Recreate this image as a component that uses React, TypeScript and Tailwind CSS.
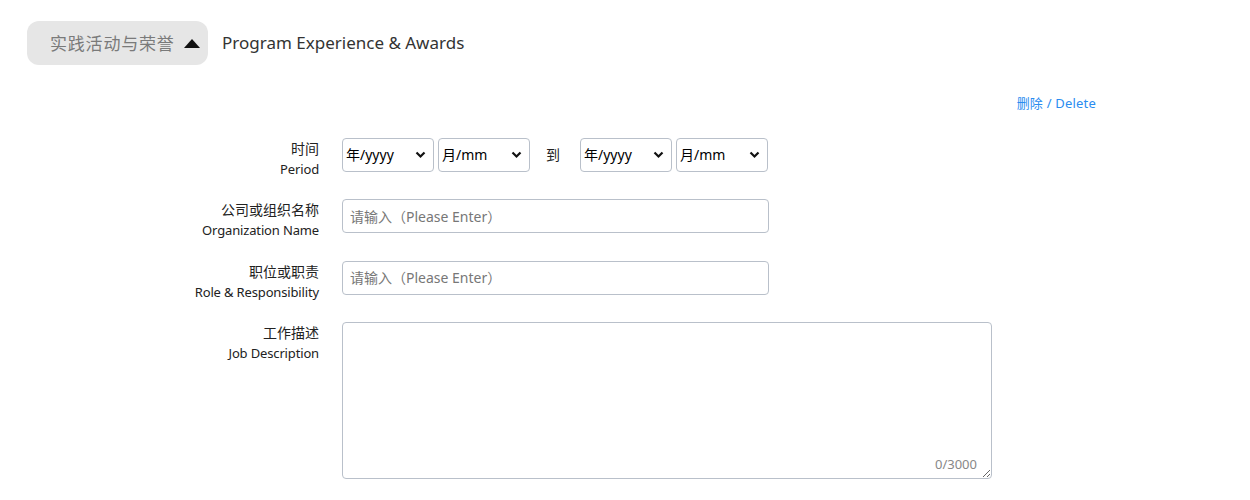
import { useState } from 'react';

const CN = '"Noto Sans", "Noto Sans CJK SC", sans-serif';

function Chevron() {
  return (
    <svg width="11" height="8" viewBox="0 0 11 8" className="pointer-events-none absolute right-[8px] top-[13px]">
      <path d="M1.5 1.5 L5.5 5.5 L9.5 1.5" stroke="#111" strokeWidth="2.2" fill="none" />
    </svg>
  );
}

function Select({ label }: { label: string }) {
  return (
    <div className="relative w-[92px]">
      <select
        className="h-[34px] w-full appearance-none rounded-[4px] border border-[#b9c0ca] bg-white pl-[3px] text-[14px] text-black outline-none"
        style={{ fontFamily: CN }}
      >
        <option>{label}</option>
      </select>
      <Chevron />
    </div>
  );
}

function Label({ cn, en }: { cn: string; en: string }) {
  return (
    <div className="h-[34px] w-[319px] shrink-0 pt-[1px] text-right leading-[20px] text-[#222]" style={{ fontFamily: CN }}>
      <div className="text-[14px]">{cn}</div>
      <div className="text-[13px] tracking-[-0.15px]">{en}</div>
    </div>
  );
}

export default function App() {
  const [desc, setDesc] = useState('');

  return (
    <div className="h-[500px] w-[1250px] bg-white" style={{ fontFamily: CN }}>
      {/* Section header */}
      <div className="flex items-center pl-[27px] pt-[21px]">
        <button className="flex h-[44px] w-[181px] items-center rounded-[12px] bg-[#e6e6e6] pl-[23px]">
          <span className="text-[17px] tracking-[0.8px] text-[#7a7a7a]" style={{ fontFamily: '"Noto Sans CJK SC", serif' }}>
            实践活动与荣誉
          </span>
          <svg width="16" height="9" viewBox="0 0 16 9" className="ml-[9px]">
            <path d="M8 0 L16 9 L0 9 Z" fill="#111" />
          </svg>
        </button>
        <span className="ml-[14px] text-[17px] text-[#333]">Program Experience &amp; Awards</span>
      </div>

      {/* Delete link */}
      <div className="mt-[29px] flex w-[1096px] justify-end">
        <a className="text-[13px] tracking-[0.2px] text-[#2a8cf0]">删除 / Delete</a>
      </div>

      {/* Form */}
      <div className="mt-[24px] flex flex-col gap-[27.5px]">
        <div className="flex h-[34px] gap-[23px]">
          <Label cn="时间" en="Period" />
          <div className="flex items-center gap-[4px]">
            <Select label="年/yyyy" />
            <Select label="月/mm" />
            <span className="ml-[12px] mr-[16px] text-[14px] text-[#222]">到</span>
            <Select label="年/yyyy" />
            <Select label="月/mm" />
          </div>
        </div>

        <div className="flex h-[34px] gap-[23px]">
          <Label cn="公司或组织名称" en="Organization Name" />
          <input
            placeholder="请输入（Please Enter）"
            className="h-[34px] w-[427px] rounded-[4px] border border-[#b9c0ca] px-[7px] text-[14px] outline-none placeholder:text-[#777]"
          />
        </div>

        <div className="flex h-[34px] gap-[23px]">
          <Label cn="职位或职责" en="Role & Responsibility" />
          <input
            placeholder="请输入（Please Enter）"
            className="h-[34px] w-[427px] rounded-[4px] border border-[#b9c0ca] px-[7px] text-[14px] outline-none placeholder:text-[#777]"
          />
        </div>

        <div className="flex gap-[23px]">
          <Label cn="工作描述" en="Job Description" />
          <div className="relative">
            <textarea
              value={desc}
              onChange={(e) => setDesc(e.target.value)}
              className="block h-[157px] w-[650px] rounded-[4px] border border-[#b9c0ca] px-[7px] py-[5px] text-[14px] outline-none"
            />
            <span className="absolute bottom-[5px] right-[15px] text-[13px] text-[#888]">{desc.length}/3000</span>
          </div>
        </div>
      </div>
    </div>
  );
}
